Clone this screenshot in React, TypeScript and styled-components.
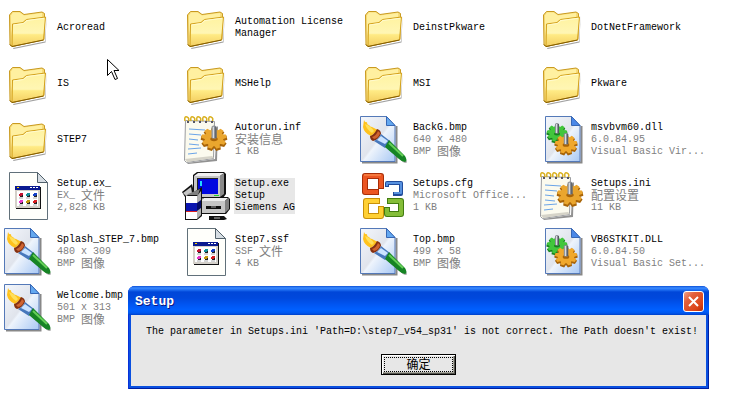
import React from 'react';
import styled, { createGlobalStyle, css } from 'styled-components';

const GlobalStyle = createGlobalStyle`
  * { box-sizing: border-box; }
  body {
    margin: 0;
    background: #fff;
    color: #000;
    font: 10px/12px "Liberation Mono", "Noto Sans CJK SC", monospace;
  }
`;

const Desktop = styled.main`
  position: relative;
  min-height: 100vh;
  overflow: hidden;
`;

const FileGrid = styled.ul`
  display: grid;
  grid-template-columns: repeat(auto-fill, 178px);
  grid-auto-rows: 56px;
  margin: 0;
  padding: 0;
  list-style: none;
`;

const FileTile = styled.li`
  display: flex;
  align-items: center;
  gap: 4px;
  padding-left: 4px;
`;

const IconArt = styled.svg`
  flex: none;
  width: 48px;
  height: 48px;
`;

const Caption = styled.div<{ $selected?: boolean }>`
  max-width: 118px;
  padding-left: 1px;
  ${(p) => p.$selected && css`background: #e7e7e7;`}
`;

const FileName = styled.div``;

const Detail = styled.div<{ $selected?: boolean }>`
  display: flex;
  align-items: center;
  height: 12px;
  white-space: pre;
  color: ${(p) => (p.$selected ? '#000' : '#808080')};
`;

const Han = styled.span`
  display: block;
  height: 12px;
  font: 12px/10px "Noto Sans CJK SC", sans-serif;
`;

const Gradients = styled.svg`
  position: absolute;
  width: 0;
  height: 0;
`;

const Dialog = styled.section`
  position: absolute;
  top: 286px;
  left: 128px;
  border-radius: 7px 7px 0 0;
  background: #0a50e0;
  box-shadow: inset 1px 0 #0831d9, inset -1px -1px #001ea0;
  padding: 0 3px 3px;
`;

const TitleBar = styled.header`
  display: flex;
  align-items: center;
  justify-content: space-between;
  height: 29px;
  margin: 0 -3px;
  padding: 2px 5px 0 7px;
  border-radius: 7px 7px 0 0;
  background: linear-gradient(#0a50d8 0, #3c8cff 2px, #1c6cf0 4px, #0046d8 6px, #0048dc 12px, #0054f0 18px, #0060ff 24px, #0058f0 27px, #0040c8 29px);
`;

const Title = styled.h1`
  margin: 0;
  font: bold 13px/16px "Liberation Mono", monospace;
  color: #fff;
  text-shadow: 1px 1px #0a1883;
`;

const CloseButton = styled.button`
  display: grid;
  place-items: center;
  width: 21px;
  height: 21px;
  padding: 0;
  border: 1px solid #fff;
  border-radius: 3px;
  background: linear-gradient(135deg, #f0a088 0, #e4603c 30%, #dc4418 75%, #b82c04 100%);
`;

const DialogBody = styled.div`
  display: flex;
  flex-direction: column;
  align-items: center;
  gap: 16px;
  padding: 11px 0;
  background: #e7e7e7;
`;

const Message = styled.p`
  margin: 0;
  padding: 0 8px 0 15px;
  white-space: nowrap;
`;

const OkButton = styled.button`
  width: 75px;
  height: 21px;
  padding: 1px;
  border: 1px solid #000;
  background: #e7e7e7;
  box-shadow: inset 1px 1px #fff, inset -1px -1px #55554f, inset -2px -2px #a5a59c;
  color: #000;
`;

const FocusFrame = styled.span`
  display: block;
  height: 15px;
  margin: 0 1px;
  border: 1px dotted #000;
  font: 12px/12px "Noto Sans CJK SC", sans-serif;
`;

const Pointer = styled.svg`
  position: absolute;
  top: 58px;
  left: 106px;
  width: 14px;
  height: 23px;
`;

type Kind = 'folder' | 'app' | 'bmp' | 'notes' | 'dll' | 'setup' | 'office';

const teeth = Array.from({ length: 9 }, (_, i) => i * 40);

function Gear({ x, y, size = 1, fill, edge }: { x: number; y: number; size?: number; fill: string; edge: string }) {
  return (
    <g transform={`translate(${x} ${y}) scale(${size})`}>
      <g transform="scale(1 .86)">
        <g fill={edge}>
          {teeth.map((a) => <path key={a} d="M-3-6l1-4.500h4l1 4.500z" transform={`translate(0 1.500) rotate(${a})`} />)}
          <circle r="8" cy="1.500" />
        </g>
        <g fill={fill}>
          {teeth.map((a) => <path key={a} d="M-2.500-6l1-4h3l1 4z" transform={`rotate(${a})`} />)}
          <circle r="7.600" />
        </g>
        <ellipse rx="3" ry="2" cy="1" fill={edge} />
      </g>
      <path d="M-2-9q2-2 4 0v9q-2 1-4 0z" fill="#8b8f96" />
      <path d="M-1-9h1v9h-1z" fill="#d8dbe0" />
      <path d="M1-9h1v9h-1z" fill="#555a62" />
    </g>
  );
}

function FolderArt() {
  return (
    <>
      <path d="M9 44L41 37.500 42.500 12v1l-1 25.500-32 6.500z" fill="#777" opacity=".7" />
      <path d="M5.500 11l3-3.500h7.500l4 3 18-2.500 2.500 1.500-.5 26L8 42.500 6 41z" fill="#f8dc78" stroke="#c99a20" />
      <path d="M7 11.500l2-3h6.500l4.500 3L38 9v4l-17 3-3 3-9 1-2 12z" fill="#fff0a0" />
      <path d="M8.500 20l10.500-1.500 3.500-3L41.500 13l-2 23L8 42.500z" fill="url(#folderFace)" stroke="#d3a11c" />
      <path d="M9.500 21l10-1.500 3.500-3L40 14.300" fill="none" stroke="#fffbd0" />
      <path d="M6 40.500l2 2 31.500-6.500" fill="none" stroke="#7f5b06" />
    </>
  );
}

function AppArt() {
  return (
    <>
      <path d="M5.500.500h28l10 10v37h-38z" fill="#fffffb" stroke="#617079" />
      <path d="M33.500.500v10h10z" fill="#d6dde3" stroke="#52616b" />
      <path d="M12 15h25v22H12z" fill="#111" />
      <path d="M11 14h25v22H11z" fill="#d4d0c8" />
      <path d="M11 14h25v4H11z" fill="#0a1a90" />
      <path d="M13 15.500h2" stroke="#ffd800" />
      <path d="M26 15.500h2m1 0h2m1 0h2" stroke="#fff" />
      <path d="M13 19h21v15H13z" fill="#fff" />
      {[['#c41230', '#13939c', '#1440c8'], ['#e838c8', '#c49a10', '#d81c20']].map((row, r) =>
        row.map((c, i) => (
          <g key={c} transform={`translate(${15 + i * 7} ${21 + r * 7})`}>
            <path d="M0 1h1V0h3v3H0z" fill={c} />
            <path d="M3 2h1v2H1V3h2z" fill="#222" />
            <path d="M0 5h4" stroke="#aaa" />
          </g>
        )),
      )}
    </>
  );
}

function BmpArt() {
  return (
    <>
      <path d="M2 46.500h34.500V10" fill="none" stroke="#888" strokeWidth="2" />
      <path d="M.500.500h26l8.500 9v36H.500z" fill="url(#paper)" stroke="#5479b8" />
      <path d="M26.500.500v9H35z" fill="#64a8f0" stroke="#3667b5" />
      <path d="M28 28L45 43q4 4 0 4-2 0-4-3L25 31z" fill="#444" opacity=".45" />
      <path d="M4 4q1 3 3 2 0 3 2 3 1 2 3 2l6 3-7 6q-7-3-8-9z" fill="#ffc21c" />
      <path d="M5 8q2 6 7 9l2-2q-3-5-9-7z" fill="#ffe05c" />
      <path d="M10 20q4-1 7-7 4 1 4 5-3 6-8 7-3-1-3-5z" fill="#843010" />
      <path d="M12 21q4-1 6-6l2 2q-1 5-6 6z" fill="#d06430" />
      <path d="M14 25q5-2 7-7l9 7-5 7z" fill="#4778bc" />
      <path d="M17 24l4-4 7 5-3 3z" fill="#cae3ff" />
      <path d="M25 31l4-7 16 16q3 5 0 6-3 0-6-3z" fill="#168424" />
      <path d="M29 27l14 13" stroke="#66cf58" strokeWidth="2" />
    </>
  );
}

function NotesArt() {
  return (
    <>
      <path d="M5 47l28-4 2-33 1 1-1 34-29 3z" fill="#777" opacity=".8" />
      <path d="M3.500 4.500l29 1-1 37-27 4-2-2z" fill="#fbfaee" stroke="#9a9ca0" />
      <path d="M3 43l27-3 2 2-27 4z" fill="#d5d3c8" />
      <path d="M7 13l16 1M7 18l12 1M7 23l9 1M7 28l10 1M6 33l13-1M6 38l9-1" stroke="#6aa4e8" />
      {[5, 11, 17, 23, 29].map((x) => (
        <g key={x} fill="none">
          <path d={`M${x - 2} 5q-1-5 2-4 3 1 1 5`} stroke="#d9b020" strokeWidth="1.500" />
          <path d={`M${x} 6h2`} stroke="#556" strokeWidth="2" />
        </g>
      ))}
      <Gear x={32} y={22} size={1.25} fill="#eaa62e" edge="#a86408" />
    </>
  );
}

function DllArt() {
  return (
    <>
      <path d="M9 46.500h34.500V10" fill="none" stroke="#888" strokeWidth="2" />
      <path d="M7.500.500h26l8.500 9v36H7.500z" fill="url(#paper)" stroke="#5479b8" />
      <path d="M33.500.500v9H42z" fill="#4a88e8" stroke="#3667b5" />
      <Gear x={19} y={17} fill="#42c63c" edge="#188020" />
      <Gear x={28} y={28} size={1.1} fill="#f0a82c" edge="#a86408" />
    </>
  );
}

function SetupArt() {
  return (
    <>
      <path d="M11 3l4-3h27l2 2v20l-3 4H14l-3-2z" fill="#111" />
      <path d="M12 4h26v21H12z" fill="#c6c6c6" />
      <path d="M12 4l4-3h26l-4 3z" fill="#f0f0f0" />
      <path d="M38 4l4-3v21l-4 3z" fill="#8a8a8a" />
      <path d="M15 6h21v16H15z" fill="#222" />
      <path d="M16 7h20v15H16z" fill="#0008e0" />
      <path d="M18 9h2v5h-2z" fill="#20d8ff" />
      <path d="M32 23h5v1h-5z" fill="#20d030" />
      <path d="M18 28l5-3h23l2 2v10l-4 5H18z" fill="#111" />
      <path d="M18 29h25v12H18z" fill="#c6c6c6" />
      <path d="M18 29l4-3h24l-3 3z" fill="#eee" />
      <path d="M43 29l4-3v11l-4 4z" fill="#808080" />
      <path d="M24 34h15v3H24z" fill="#111" />
      <path d="M29 35h5" stroke="#aaa" />
      <path d="M27 44h15l3 3-3 1H27z" fill="#111" />
      <path d="M32 46h6" stroke="#bbb" />
      <path d="M0 20l10-8 2 8 8-5v29l-5 4H3V25z" fill="#111" />
      <path d="M1 21l8-6 1 6-6 3z" fill="#c6c6c6" />
      <path d="M6 22l12-5-2 6H5z" fill="#808080" />
      <path d="M4 24h11v23H4z" fill="#fff" />
      <path d="M15 24l4-5v24l-4 4z" fill="#b0b0b0" />
      <path d="M4 31h11v8H4z" fill="#0b15b0" />
      <path d="M15 31l4-3v8l-4 3z" fill="#050b66" />
      <path d="M4 39.500h11" stroke="#d22" />
    </>
  );
}

function OfficeArt() {
  return (
    <g fill="none" strokeLinejoin="round">
      <path d="M19 20H5V4h16v13" stroke="#a82e08" strokeWidth="6" />
      <path d="M18 20H5V4h16v12" stroke="#ec5622" strokeWidth="4" />
      <path d="M4 3h17" stroke="#ff9a58" />
      <path d="M27 15v-4h14v11h-8" stroke="#214c9c" strokeWidth="4" />
      <path d="M27 14v-3h14v10h-7" stroke="#5791df" strokeWidth="2" />
      <path d="M20 29H6v15h15v-10" stroke="#c89008" strokeWidth="6" />
      <path d="M19 29H6v15h15v-9" stroke="#ffd034" strokeWidth="4" />
      <path d="M27 29h14v13H27v-7" stroke="#427c10" strokeWidth="6" />
      <path d="M28 29h13v13H27v-6" stroke="#84bd38" strokeWidth="4" />
    </g>
  );
}

const art: Record<Kind, () => React.JSX.Element> = {
  folder: FolderArt, app: AppArt, bmp: BmpArt, notes: NotesArt, dll: DllArt, setup: SetupArt, office: OfficeArt,
};

interface Entry { kind: Kind; name: string; details?: string[]; selected?: boolean }

const entries: Entry[] = [
  { kind: 'folder', name: 'Acroread' },
  { kind: 'folder', name: 'Automation License Manager' },
  { kind: 'folder', name: 'DeinstPkware' },
  { kind: 'folder', name: 'DotNetFramework' },
  { kind: 'folder', name: 'IS' },
  { kind: 'folder', name: 'MSHelp' },
  { kind: 'folder', name: 'MSI' },
  { kind: 'folder', name: 'Pkware' },
  { kind: 'folder', name: 'STEP7' },
  { kind: 'notes', name: 'Autorun.inf', details: ['安装信息', '1 KB'] },
  { kind: 'bmp', name: 'BackG.bmp', details: ['640 x 480', 'BMP 图像'] },
  { kind: 'dll', name: 'msvbvm60.dll', details: ['6.0.84.95', 'Visual Basic Vir...'] },
  { kind: 'app', name: 'Setup.ex_', details: ['EX_ 文件', '2,828 KB'] },
  { kind: 'setup', name: 'Setup.exe', details: ['Setup', 'Siemens AG'], selected: true },
  { kind: 'office', name: 'Setups.cfg', details: ['Microsoft Office...', '1 KB'] },
  { kind: 'notes', name: 'Setups.ini', details: ['配置设置', '11 KB'] },
  { kind: 'bmp', name: 'Splash_STEP_7.bmp', details: ['480 x 309', 'BMP 图像'] },
  { kind: 'app', name: 'Step7.ssf', details: ['SSF 文件', '4 KB'] },
  { kind: 'bmp', name: 'Top.bmp', details: ['499 x 58', 'BMP 图像'] },
  { kind: 'dll', name: 'VB6STKIT.DLL', details: ['6.0.84.50', 'Visual Basic Set...'] },
  { kind: 'bmp', name: 'Welcome.bmp', details: ['501 x 313', 'BMP 图像'] },
];

function MixedText({ text }: { text: string }) {
  return (
    <>
      {text.split(/([\u4e00-\u9fff]+)/).filter(Boolean).map((part) =>
        /[\u4e00-\u9fff]/.test(part) ? <Han key={part}>{part}</Han> : <span key={part}>{part}</span>,
      )}
    </>
  );
}

export default function App() {
  return (
    <Desktop>
      <GlobalStyle />
      <Gradients aria-hidden="true">
        <defs>
          <linearGradient id="folderFace" x1="0" y1="0" x2="0" y2="1">
            <stop offset="0" stopColor="#fff3a0" />
            <stop offset=".55" stopColor="#fff6b4" />
            <stop offset=".6" stopColor="#ffeb85" />
            <stop offset="1" stopColor="#f3ce60" />
          </linearGradient>
          <linearGradient id="paper" x1="0" y1="0" x2="1" y2="1">
            <stop offset="0" stopColor="#f4f7fc" />
            <stop offset=".5" stopColor="#e0e4ec" />
            <stop offset=".54" stopColor="#eef4fc" />
            <stop offset="1" stopColor="#a8c8f4" />
          </linearGradient>
        </defs>
      </Gradients>
      <FileGrid>
        {entries.map(({ kind, name, details = [], selected }) => {
          const Art = art[kind];
          return (
            <FileTile key={name}>
              <IconArt viewBox="0 0 48 48" aria-hidden="true"><Art /></IconArt>
              <Caption $selected={selected}>
                <FileName>{name}</FileName>
                {details.map((d) => <Detail key={d} $selected={selected}><MixedText text={d} /></Detail>)}
              </Caption>
            </FileTile>
          );
        })}
      </FileGrid>
      <Pointer viewBox="0 0 14 23" aria-hidden="true">
        <path d="M1.500 1.500v16l4-4 3.500 8 2.500-1-3.500-8h5z" fill="#fff" stroke="#000" />
      </Pointer>
      <Dialog role="dialog" aria-labelledby="dialog-title">
        <TitleBar>
          <Title id="dialog-title">Setup</Title>
          <CloseButton aria-label="Close">
            <svg width="13" height="13" viewBox="0 0 13 13"><path d="M2 2l9 9M11 2l-9 9" stroke="#fff" strokeWidth="2" /></svg>
          </CloseButton>
        </TitleBar>
        <DialogBody>
          <Message>{"The parameter in Setups.ini 'Path=D:\\step7_v54_sp31' is not correct. The Path doesn't exist!"}</Message>
          <OkButton><FocusFrame>确定</FocusFrame></OkButton>
        </DialogBody>
      </Dialog>
    </Desktop>
  );
}
